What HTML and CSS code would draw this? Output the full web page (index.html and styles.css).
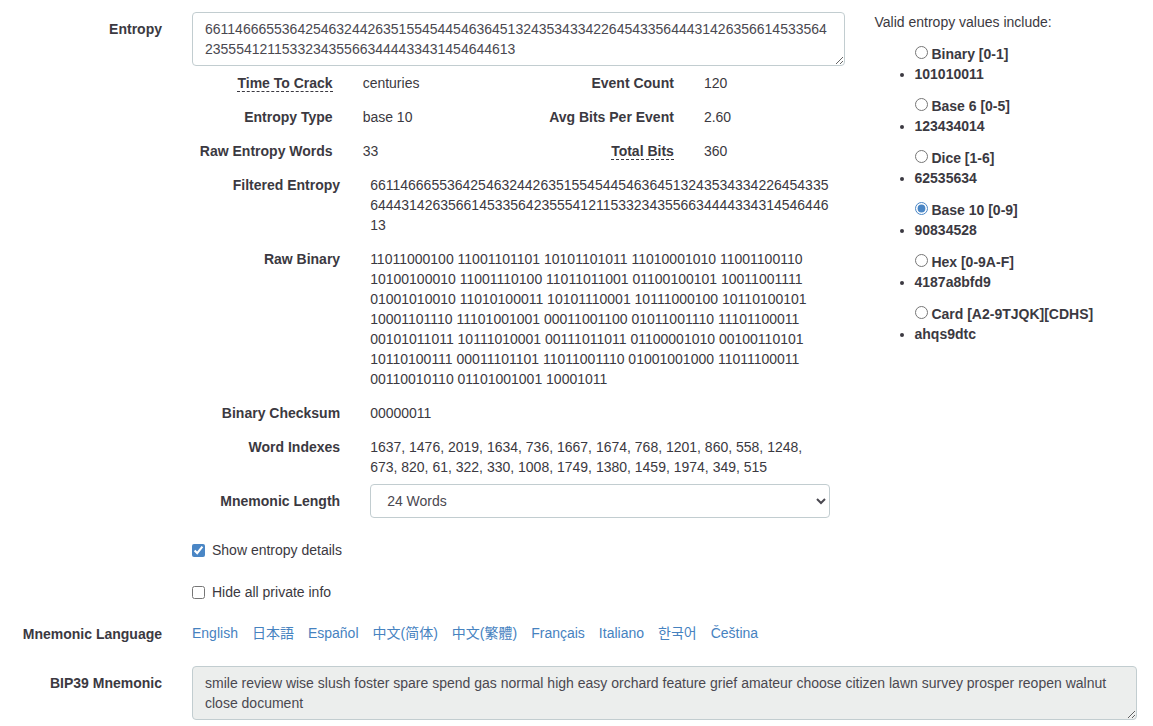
FILE: index.html
```html
<!DOCTYPE html>
<html lang="en">
<head>
<meta charset="utf-8">
<meta name="viewport" content="width=device-width, initial-scale=1">
<title>Mnemonic Code Converter</title>
<link rel="stylesheet" href="styles.css">
</head>
<body>
<form class="form">
  <div class="form-row">
    <label class="label" for="entropy">Entropy</label>
    <div class="entropy">
      <div class="entropy-main">
        <textarea class="control" id="entropy" rows="2" spellcheck="false">661146665536425463244263515545445463645132435343342264543356444314263566145335642355541211533234355663444433431454644613</textarea>
        <dl class="stats">
          <dt class="label"><span class="hint">Time To Crack</span></dt>
          <dd class="value">centuries</dd>
          <dt class="label">Event Count</dt>
          <dd class="value">120</dd>
          <dt class="label">Entropy Type</dt>
          <dd class="value">base 10</dd>
          <dt class="label">Avg Bits Per Event</dt>
          <dd class="value">2.60</dd>
          <dt class="label">Raw Entropy Words</dt>
          <dd class="value">33</dd>
          <dt class="label"><span class="hint">Total Bits</span></dt>
          <dd class="value">360</dd>
        </dl>
        <dl class="details">
          <dt class="label">Filtered Entropy</dt>
          <dd class="value">661146665536425463244263515545445463645132435343342264543356444314263566145335642355541211533234355663444433431454644613</dd>
          <dt class="label">Raw Binary</dt>
          <dd class="value">11011000100 11001101101 10101101011 11010001010 11001100110 10100100010 11001110100 11011011001 01100100101 10011001111 01001010010 11010100011 10101110001 10111000100 10110100101 10001101110 11101001001 00011001100 01011001110 11101100011 00101011011 10111010001 00111011011 01100001010 00100110101 10110100111 00011101101 11011001110 01001001000 11011100011 00110010110 01101001001 10001011</dd>
          <dt class="label">Binary Checksum</dt>
          <dd class="value">00000011</dd>
          <dt class="label">Word Indexes</dt>
          <dd class="value">1637, 1476, 2019, 1634, 736, 1667, 1674, 768, 1201, 860, 558, 1248, 673, 820, 61, 322, 330, 1008, 1749, 1380, 1459, 1974, 349, 515</dd>
        </dl>
        <div class="details">
          <label class="label" for="length">Mnemonic Length</label>
          <div class="field">
            <select class="control" id="length">
              <option>12 Words</option>
              <option selected>24 Words</option>
            </select>
          </div>
        </div>
      </div>
      <div class="types">
        <p class="types-title">Valid entropy values include:</p>
        <ul class="types-list">
          <li><label class="type"><input class="radio" type="radio" name="type"> Binary [0-1]<br>101010011</label></li>
          <li><label class="type"><input class="radio" type="radio" name="type"> Base 6 [0-5]<br>123434014</label></li>
          <li><label class="type"><input class="radio" type="radio" name="type"> Dice [1-6]<br>62535634</label></li>
          <li><label class="type"><input class="radio" type="radio" name="type" checked> Base 10 [0-9]<br>90834528</label></li>
          <li><label class="type"><input class="radio" type="radio" name="type"> Hex [0-9A-F]<br>4187a8bfd9</label></li>
          <li><label class="type"><input class="radio" type="radio" name="type"> Card [A2-9TJQK][CDHS]<br>ahqs9dtc</label></li>
        </ul>
      </div>
    </div>
  </div>
  <div class="options">
    <label class="option"><input class="checkbox" type="checkbox" checked>Show entropy details</label>
    <label class="option"><input class="checkbox" type="checkbox">Hide all private info</label>
  </div>
  <div class="form-row">
    <span class="label">Mnemonic Language</span>
    <nav class="languages" aria-label="Mnemonic Language">
      <a href="#english">English</a>
      <a href="#japanese" lang="ja">日本語</a>
      <a href="#spanish">Español</a>
      <a href="#chinese_simplified" lang="zh-CN">中文(简体)</a>
      <a href="#chinese_traditional" lang="zh-TW">中文(繁體)</a>
      <a href="#french">Français</a>
      <a href="#italian">Italiano</a>
      <a href="#korean" lang="ko">한국어</a>
      <a href="#czech">Čeština</a>
    </nav>
  </div>
  <div class="form-row">
    <label class="label" for="phrase">BIP39 Mnemonic</label>
    <div class="field">
      <textarea class="control" id="phrase" rows="2" readonly spellcheck="false">smile review wise slush foster spare spend gas normal high easy orchard feature grief amateur choose citizen lawn survey prosper reopen walnut close document</textarea>
    </div>
  </div>
</form>
</body>
</html>
```

FILE: styles.css
```css
* {
  box-sizing: border-box;
}

body {
  margin: 0;
  padding: 12px 1px 6px 0;
  background: #fff;
  color: #3b3941;
  font-family: "Liberation Sans", "Noto Sans CJK SC", sans-serif;
  font-size: 14px;
  line-height: 20px;
}

.form {
  display: flex;
  flex-direction: column;
  gap: 15px;
}

.form-row {
  display: grid;
  grid-template-columns: 177px minmax(0, 1fr);
}

.label {
  padding: 7px 15px 0;
  font-weight: bold;
  text-align: right;
}

.entropy {
  display: grid;
  grid-template-columns: minmax(0, 7fr) minmax(0, 3fr);
}

.entropy-main,
.types,
.field {
  padding: 0 15px;
}

.control {
  display: block;
  width: 100%;
  margin: 0;
  padding: 6px 12px;
  border: 1px solid #c2cdd0;
  border-radius: 4px;
  background: #fff;
  color: #4a4850;
  font: inherit;
}

.control[readonly] {
  background: #eceeed;
}

select.control {
  height: 34px;
}

.stats {
  display: grid;
  grid-template-columns: repeat(4, minmax(0, 1fr));
  margin: 0 -15px;
}

.details {
  display: grid;
  grid-template-columns: minmax(0, 1fr) minmax(0, 3fr);
  margin: 0;
}

.value {
  margin: 0;
  padding: 7px 15px;
  overflow-wrap: break-word;
}

.hint {
  border-bottom: 1px dashed #3b3941;
}

.types-title {
  margin: 0 0 5px;
}

.types-list {
  margin: 0;
  padding-left: 40px;
}

.type {
  display: inline-block;
  padding: 7px 0 5px;
  font-weight: bold;
}

.radio,
.checkbox {
  width: 13px;
  height: 13px;
  margin: 0;
  accent-color: #4a86c5;
}

.radio {
  vertical-align: baseline;
}

.options {
  display: flex;
  flex-direction: column;
  align-items: flex-start;
  gap: 15px;
  margin-left: 192px;
}

.option {
  display: grid;
  grid-template-columns: auto auto;
  align-items: center;
  gap: 7px;
  padding-top: 7px;
}

.languages {
  display: flex;
  flex-wrap: wrap;
  gap: 0 14px;
  padding: 6px 15px 8px;
}

.languages a {
  color: #4682bf;
  text-decoration: none;
}

.languages :lang(ja) {
  font-family: "Liberation Sans", "Noto Sans CJK JP", sans-serif;
}

.languages :lang(zh-TW) {
  font-family: "Liberation Sans", "Noto Sans CJK TC", sans-serif;
}

.languages :lang(ko) {
  font-family: "Liberation Sans", "Noto Sans CJK KR", sans-serif;
}
```
